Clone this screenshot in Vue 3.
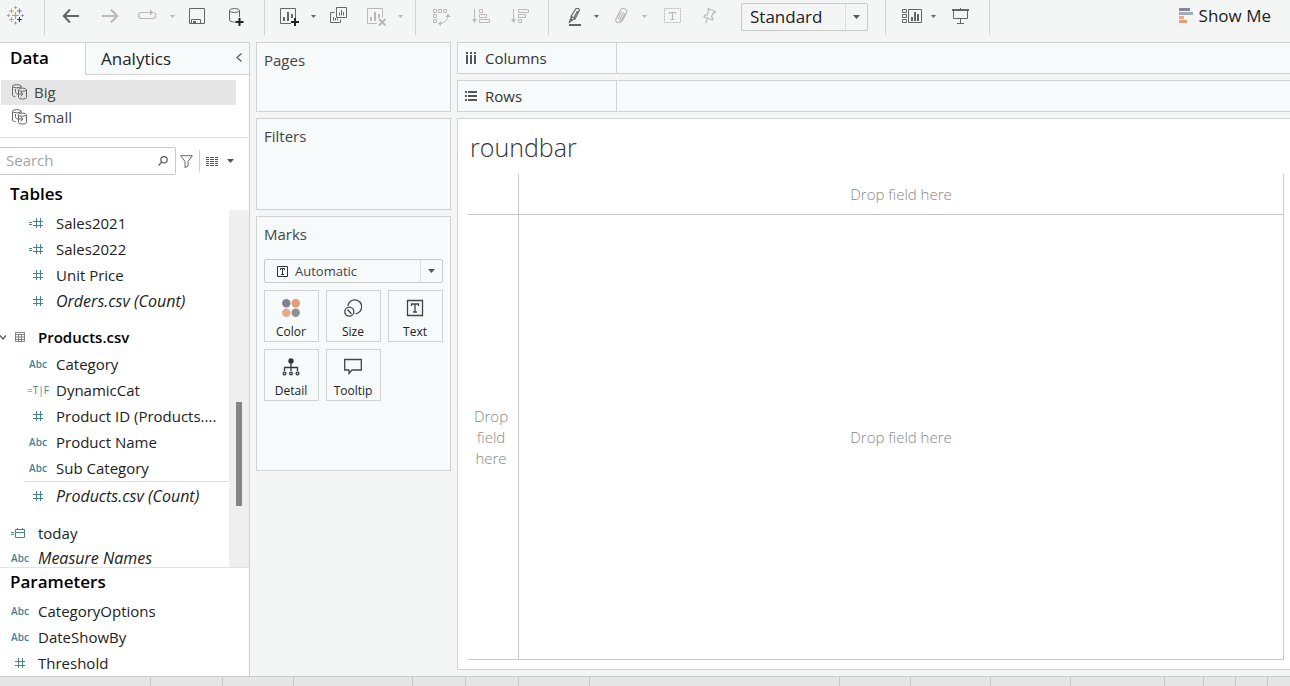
<script setup>
import { ref } from 'vue'

const sources = ['Big', 'Small']
const selected = ref('Big')
const size = ref('Standard')
const mark = ref('Automatic')
const search = ref('')

const rows = [
  { kind: 'calc', label: 'Sales2021', nested: true },
  { kind: 'calc', label: 'Sales2022', nested: true },
  { kind: 'num', label: 'Unit Price', nested: true },
  { kind: 'num', label: 'Orders.csv (Count)', nested: true, italic: true },
  { kind: 'table', label: 'Products.csv', header: true },
  { kind: 'abc', label: 'Category', nested: true },
  { kind: 'bool', label: 'DynamicCat', nested: true },
  { kind: 'num', label: 'Product ID (Products....', nested: true },
  { kind: 'abc', label: 'Product Name', nested: true },
  { kind: 'abc', label: 'Sub Category', nested: true },
  { kind: 'num', label: 'Products.csv (Count)', nested: true, italic: true, ruled: true },
  { kind: 'date', label: 'today', spaced: true },
  { kind: 'abc', label: 'Measure Names', italic: true, last: true }
]
const params = [
  { kind: 'abc', label: 'CategoryOptions' },
  { kind: 'abc', label: 'DateShowBy' },
  { kind: 'num', label: 'Threshold' }
]
const sheetTabs = [150, 71, 70, 118, 52, 52, 70, 249, 70, 79, 79, 93, 38, 31, 31]
</script>

<template>
  <div class="app">
    <header class="toolbar">
      <div class="group logo">
        <svg width="19" height="19" viewBox="0 0 19 19" fill="none" aria-hidden="true">
          <path d="M6 9.500h7M9.500 6v7" stroke="#e8914d" stroke-width="1.200" />
          <path d="M3 5h5M5.500 2.500v5" stroke="#d0a070" />
          <path d="M11 5h5M13.500 2.500v5" stroke="#5b879b" />
          <path d="M3 13.500h5M5.500 11v5" stroke="#e0a35d" />
          <path d="M11 13.500h5M13.500 11v5" stroke="#1f457e" stroke-width="1.200" />
          <path d="M8 1.500h3M9.500 0v3M1 9.500h3M2.500 8v3" stroke="#98a3b8" />
          <path d="M15 9.500h3M16.500 8v3M8 17h3M9.500 15.500v3" stroke="#9a99b6" />
        </svg>
      </div>
      <div class="group g1">
        <button class="tool" aria-label="Undo"><svg width="19" height="19" viewBox="0 0 19 19"><path d="M3 9h15M9 2.500 2.800 9 9 15.500" stroke-width="2" /></svg></button>
        <button class="tool off" aria-label="Redo"><svg width="19" height="19" viewBox="0 0 19 19"><path d="M2 9h15M11 2.500 17.200 9 11 15.500" stroke-width="2" /></svg></button>
        <button class="tool off" aria-label="Replay"><svg width="19" height="19" viewBox="0 0 19 19"><path d="M9 11.500h5a3 3 0 0 0 2.800-3V8a3 3 0 0 0-2.300-2.500M6 11.500H2a3 3 0 0 1-2.500-3A3 3 0 0 1 2 5.500h10M5 11.500h6" stroke-width="1.200" /><path class="solid" d="M11 2.200 14.500 5.500 11 8.800z" /></svg></button>
        <button class="caret off" aria-label="Replay options"><svg width="5" height="3" viewBox="0 0 5 3"><path class="solid" d="M0 0h5L2.500 3z" /></svg></button>
        <button class="tool" aria-label="Save"><svg width="19" height="19" viewBox="0 0 19 19"><path d="M2.500 1.500h15v15h-15zM4.500 16v-3.500h9V16" /><path class="solid" d="M6 14h3v2.500H6z" /></svg></button>
        <button class="tool" aria-label="New data source"><svg width="19" height="19" viewBox="0 0 19 19"><ellipse cx="8.500" cy="3.500" rx="5" ry="2" /><path d="M3.500 3.500v9.500c0 1 2 2 5 2M13.500 3.500V10" /><path d="M9.500 15h8M13.500 11v8" class="plus" /></svg></button>
      </div>
      <div class="group g2">
        <button class="tool" aria-label="New worksheet"><svg width="19" height="19" viewBox="0 0 19 19"><path d="M11 16.500H.5v-15h15v10" /><path class="solid" d="M3 10h2v4H3zM7 5h2v9H7zM11 7h2v4h-2z" /><path d="M11 15h8M15 11v8" class="plus" /></svg></button>
        <button class="caret" aria-label="Worksheet options"><svg width="5" height="3" viewBox="0 0 5 3"><path class="solid" d="M0 0h5L2.500 3z" /></svg></button>
        <button class="tool" aria-label="Duplicate"><svg width="19" height="19" viewBox="0 0 19 19"><path d="M8.500.5h10v10h-10zM6.500 5.500h-4v10h10v-3M11.500 5.500v3M13.500 3v5.500M15.500 5v3.500M5.500 10v3.500M7.500 11v2.500M9.500 11.500v2" /></svg></button>
        <button class="tool off" aria-label="Clear sheet"><svg width="19" height="19" viewBox="0 0 19 19"><path d="M10 16.500H.5v-15h15v9" /><path class="solid" d="M3 10h2v4H3zM7 5h2v9H7zM11 7h2v4h-2z" /><path d="m12 12 6.500 6.500M18.500 12 12 18.500" stroke-width="2" /></svg></button>
        <button class="caret off" aria-label="Clear options"><svg width="5" height="3" viewBox="0 0 5 3"><path class="solid" d="M0 0h5L2.500 3z" /></svg></button>
      </div>
      <div class="group g3">
        <button class="tool off" aria-label="Swap rows and columns"><svg width="19" height="19" viewBox="0 0 19 19"><path d="M1.500 2.500h3v3h-3zM6.500 2.500h3v3h-3zM11.500 2.500h3v3h-3zM1.500 7.500h3v3h-3zM1.500 12.500h3v3h-3zM7 16.500c5.500 0 9-3.500 9-8.500" /><path class="solid" d="M16 6.500 13.500 10h5zM6 16.500 9 14v5z" /></svg></button>
        <button class="tool off" aria-label="Sort ascending"><svg width="19" height="19" viewBox="0 0 19 19"><path d="M3.500 2v12M8.500 2.500h3v3h-3zM8.500 7.500h7v3h-7zM8.500 12.500h10v3h-10z" /><path class="solid" d="M1 12h5l-2.500 4z" /></svg></button>
        <button class="tool off" aria-label="Sort descending"><svg width="19" height="19" viewBox="0 0 19 19"><path d="M3.500 2v12M8.500 2.500h10v3h-10zM8.500 7.500h7v3h-7zM8.500 12.500h3v3h-3z" /><path class="solid" d="M1 12h5l-2.500 4z" /></svg></button>
      </div>
      <div class="group g4">
        <button class="tool pen" aria-label="Highlight"><svg width="19" height="19" viewBox="0 0 19 19"><path class="solid" d="M5 17h12v2H5z" /><path d="M12 1.500h2.500l1 1.500-4.500 9-3.500 1-.5-3.500zM7.500 9.500l3.500 2M13.500 4l-3.500 6.500M6.500 11.500l-1 3.500 3-2" stroke-width="1.200" /></svg></button>
        <button class="caret" aria-label="Highlight options"><svg width="5" height="3" viewBox="0 0 5 3"><path class="solid" d="M0 0h5L2.500 3z" /></svg></button>
        <button class="tool off" aria-label="Group members"><svg width="19" height="19" viewBox="0 0 19 19"><path d="M14 6.500 10.500 13.500c-1.500 3.500-7 2.500-5.500-1.500L9.500 3c2-3 7.500-1 6 2.500l-4 8c-1 1.500-3 .5-2.500-1l3.500-7M7 12l3.500-7.500" stroke-width="1.200" /></svg></button>
        <button class="caret off" aria-label="Group options"><svg width="5" height="3" viewBox="0 0 5 3"><path class="solid" d="M0 0h5L2.500 3z" /></svg></button>
        <button class="tool labels off" aria-label="Show mark labels"><svg width="19" height="19" viewBox="0 0 19 19"><rect x="1.500" y="1.500" width="16" height="14" stroke-dasharray="2 1" /><path d="M6.500 7V5.500h6V7M9.500 5.500v7M7.500 12.500h4" stroke-width="1.200" /></svg></button>
        <button class="tool pin off" aria-label="Fix axes"><svg width="19" height="19" viewBox="0 0 19 19"><path d="m8 1.500 7.500 3-1 1.500-1.500-.2-1.500 4 1.500 2-.7 1.200L4 9.700l.5-1.200 2.700-.7 1.500-4zM7.500 11.500l-2 4.500" stroke-width="1.200" /></svg></button>
        <div class="select-box fit">
          <select v-model="size" aria-label="Fit"><option>Standard</option></select>
          <span class="drop"><svg width="7" height="4" viewBox="0 0 7 4"><path d="M0 0h7L3.500 4z" /></svg></span>
        </div>
      </div>
      <div class="group g5">
        <button class="tool cards-btn" aria-label="Show cards"><svg width="19" height="19" viewBox="0 0 19 19"><path d="M.5 2.500h4v3h-4zM.5 7.500h4v3h-4zM.5 12.500h4v3h-4zM6.500 2.500h13v13h-13z" /><path class="solid" d="M9 10h2v4H9zM12 5h2v9h-2zM15 7h2v7h-2z" /></svg></button>
        <button class="caret" aria-label="Card options"><svg width="5" height="3" viewBox="0 0 5 3"><path class="solid" d="M0 0h5L2.500 3z" /></svg></button>
        <button class="tool present" aria-label="Presentation mode"><svg width="19" height="19" viewBox="0 0 19 19"><path class="solid" d="M1 2h17v2H1zM9 1h1v2H9z" /><path d="M2.500 4v7.500h14V4M9.500 12v4.500M6 16.500h7" /></svg></button>
      </div>
      <button class="showme">
        <svg width="14" height="15" viewBox="0 0 14 15" aria-hidden="true"><path fill="#8b8494" d="M0 0h11v3H0z" /><path fill="#9aaebf" d="M0 4h14v3H0z" /><path fill="#eda988" d="M0 8h5v3H0z" /><path fill="#e69b78" d="M0 12h8v3H0z" /></svg>
        Show Me
      </button>
    </header>

    <main class="main">
      <aside class="side">
        <div class="tabs">
          <button class="tab active">Data</button>
          <button class="tab">Analytics</button>
          <button class="collapse" aria-label="Collapse pane"><svg width="6" height="9" viewBox="0 0 6 9"><path d="M5.500.5 1 4.500l4.500 4" fill="none" stroke="#555" stroke-width="1.200" /></svg></button>
        </div>
        <div class="sources">
          <button v-for="s in sources" :key="s" class="source" :class="{ on: s === selected }" @click="selected = s">
            <svg width="15" height="16" viewBox="0 0 15 16" fill="none" stroke="#666" aria-hidden="true">
              <path d="M.5 2.500v8.500c0 1 1 1.500 3 1.800M9 1.800V4" /><ellipse cx="4.700" cy="2.200" rx="4.200" ry="1.600" />
              <ellipse cx="10.300" cy="5.700" rx="4" ry="1.600" /><path d="M6.500 6v7.500c0 2 8 2 8 0V6" />
              <path d="M3.500 5v2.500c0 2 1 2.500 3 2.500h4M8.500 7.800l2.500 2.200-2.500 2.200" />
            </svg>
            {{ s }}
          </button>
        </div>
        <div class="searchbar">
          <div class="search">
            <input v-model="search" type="text" placeholder="Search" aria-label="Search fields" />
            <svg width="10" height="10" viewBox="0 0 10 10" fill="none" stroke="#555" stroke-width="1.200" aria-hidden="true"><circle cx="6" cy="3.800" r="3.200" /><path d="M3.700 6.200.5 9.500" /></svg>
          </div>
          <button class="plain filter" aria-label="Filter fields"><svg width="13" height="13" viewBox="0 0 13 13" fill="none" stroke="#666"><path d="M.7.700h11.600L8 6.500v4.800L5 12.500v-6z" /></svg></button>
          <button class="plain view" aria-label="View as list">
            <svg width="12" height="9" viewBox="0 0 12 9" fill="none" stroke="#555"><path d="M0 .5h12M0 2.500h12M0 4.500h12M0 6.500h12M0 8.500h12" stroke-dasharray="3 1 4 1 3 0" /></svg>
            <svg width="7" height="4" viewBox="0 0 7 4"><path fill="#555" d="M0 0h7L3.500 4z" /></svg>
          </button>
        </div>
        <h2>Tables</h2>
        <div class="tree">
          <ul>
            <li v-for="r in rows" :key="r.label" :class="{ nested: r.nested, italic: r.italic, header: r.header, ruled: r.ruled, spaced: r.spaced, last: r.last }">
              <svg v-if="r.header" class="twisty" width="7" height="5" viewBox="0 0 7 5" fill="none" stroke="#555" stroke-width="1.200" aria-hidden="true"><path d="m0 .5 3 3.500L6 .5" /></svg>
              <span class="kind">
                <template v-if="r.kind === 'abc'">Abc</template>
                <span v-else-if="r.kind === 'bool'" class="bool">=T|F</span>
                <svg v-else width="18" height="12" viewBox="0 0 18 12" fill="none" stroke="#44858a" aria-hidden="true">
                  <path v-if="r.kind === 'calc' || r.kind === 'date'" d="M0 5.500h3M0 7.500h3" />
                  <path v-if="r.kind === 'calc' || r.kind === 'num'" d="M4 4.500h10M4 8.500h10M7.500 1v10M11.500 1v10" />
                  <path v-if="r.kind === 'date'" d="M4.500 2.500h9v8h-9zM4 5.500h10M6.500 1v2M11.500 1v2" />
                  <path v-if="r.kind === 'table'" stroke="#777" d="M4.500 1.500h9v9h-9zM4 3.500h10M4 6h10M4 8.500h10M7.500 4v7M10.500 4v7" stroke-width=".9" />
                </svg>
              </span>
              <span>{{ r.label }}</span>
            </li>
          </ul>
          <div class="track"><div class="thumb"></div></div>
        </div>
        <h2 class="params-title">Parameters</h2>
        <ul>
          <li v-for="p in params" :key="p.label">
            <span class="kind">
              <template v-if="p.kind === 'abc'">Abc</template>
              <svg v-else width="18" height="12" viewBox="0 0 18 12" fill="none" stroke="#44858a" aria-hidden="true"><path d="M4 4.500h10M4 8.500h10M7.500 1v10M11.500 1v10" /></svg>
            </span>
            <span>{{ p.label }}</span>
          </li>
        </ul>
      </aside>

      <div class="cards">
        <section class="card pages"><h3>Pages</h3></section>
        <section class="card filters"><h3>Filters</h3></section>
        <section class="card marks">
          <h3>Marks</h3>
          <div class="select-box mark">
            <svg class="mark-icon" width="11" height="11" viewBox="0 0 11 11" fill="none" stroke="#333" aria-hidden="true"><path d="M.5.5h10v10H.5zM3.500 4V2.500h4V4M5.500 2.500v6M4 8.500h3" /></svg>
            <select v-model="mark" aria-label="Mark type"><option>Automatic</option></select>
            <span class="drop"><svg width="7" height="4" viewBox="0 0 7 4"><path d="M0 0h7L3.500 4z" /></svg></span>
          </div>
          <div class="shelf">
            <button><svg width="18" height="18" viewBox="0 0 18 18"><circle cx="4.300" cy="4.300" r="4.200" fill="#85808f" /><circle cx="13.700" cy="4.300" r="4.200" fill="#e69a76" /><circle cx="4.300" cy="13.700" r="4.200" fill="#e9a984" /><circle cx="13.700" cy="13.700" r="4.200" fill="#8d9196" /></svg>Color</button>
            <button><svg width="18" height="18" viewBox="0 0 18 18" fill="none" stroke="#444" stroke-width="1.300"><path d="M3.800 6.800A7 7 0 1 1 11.500 14.800" /><circle cx="5.300" cy="12.700" r="4.500" /><path d="m3.500 10.500 4 4.500" /></svg>Size</button>
            <button><svg width="18" height="18" viewBox="0 0 18 18" fill="none" stroke="#444" stroke-width="1.300"><path d="M1.500 1.500h15v15h-15zM5.500 7V5h7v2M9 5v8M7 13h4" /></svg>Text</button>
            <button><svg width="18" height="18" viewBox="0 0 18 18" fill="none" stroke="#333" stroke-width="1.300"><circle cx="9" cy="3" r="2.700" fill="#333" stroke="none" /><path d="M9 4v9M2.500 13V9.500h13V13" /><circle cx="2.500" cy="15.500" r="1.400" /><circle cx="9" cy="15.500" r="1.400" /><circle cx="15.500" cy="15.500" r="1.400" /></svg>Detail</button>
            <button><svg width="18" height="18" viewBox="0 0 18 18" fill="none" stroke="#444" stroke-width="1.300"><path d="M.7 1.500h16.600v10.500H8L5 15.500V12H.7z" /></svg>Tooltip</button>
          </div>
        </section>
      </div>

      <div class="work">
        <div class="pill-shelf">
          <div class="pill-label"><svg width="12" height="12" viewBox="0 0 12 12" aria-hidden="true"><path fill="#555" d="M1 0h2v2H1zM5 0h2v2H5zM9 0h2v2H9zM1 3h2v9H1zM5 3h2v9H5zM9 3h2v9H9z" /></svg>Columns</div>
        </div>
        <div class="pill-shelf">
          <div class="pill-label"><svg width="12" height="12" viewBox="0 0 12 12" aria-hidden="true"><path fill="#555" d="M0 1h2v2H0zM0 5h2v2H0zM0 9h2v2H0zM3 1h9v2H3zM3 5h9v2H3zM3 9h9v2H3z" /></svg>Rows</div>
        </div>
        <section class="viz">
          <h1>roundbar</h1>
          <div class="canvas">
            <div class="corner"></div>
            <div class="zone top">Drop field here</div>
            <div class="zone left">Drop field here</div>
            <div class="zone body">Drop field here</div>
          </div>
        </section>
      </div>
    </main>

    <footer class="sheets"><span v-for="(w, i) in sheetTabs" :key="i" :style="{ width: w + 'px' }"></span></footer>
  </div>
</template>

<style>
body { margin: 0; }
</style>

<style scoped>
.app, .app * { box-sizing: border-box; }
.app {
  height: 100vh;
  display: flex;
  flex-direction: column;
  overflow: hidden;
  background: #f4f6f5;
  color: #222;
  font: 15px/26px "Open Sans", "Noto Sans", sans-serif;
}
button, input, select { font: inherit; color: inherit; background: none; border: 0; padding: 0; margin: 0; border-radius: 0; }
ul { list-style: none; margin: 0; padding: 0; }
h1, h2, h3 { margin: 0; }

.toolbar { display: flex; height: 42px; flex: none; }
.group { display: flex; height: 35px; border-right: 1px solid #d2d4d4; flex: none; }
.logo { width: 45px; padding: 6px 0 0 6px; }
.g1 { padding: 0 9px 0 6px; }
.g2 { padding: 0 10px 0 5px; }
.g3 { padding: 0 9px 0 6px; }
.g4 { padding: 0 17px 0 6px; }
.g5 { padding: 0 6px 0 8px; }
.tool, .caret { height: 33px; display: flex; align-items: center; justify-content: center; }
.tool { width: 39px; }
.caret { width: 9px; }
.pen { width: 37px; }
.labels { width: 47px; }
.pin { width: 27px; }
.cards-btn { width: 35px; }
.present { width: 45px; }
.tool svg { fill: none; stroke: #666; overflow: visible; flex: none; }
.caret svg, .tool .solid { fill: #666; stroke: none; }
.off svg { stroke: #bcb8ba; }
.off .solid, .caret.off .solid { fill: #bcb8ba; stroke: none; }
.tool .plus { stroke: #222; stroke-width: 2; }

.select-box { display: flex; align-items: stretch; border: 1px solid #c8caca; border-radius: 2px; position: relative; }
.select-box select { appearance: none; flex: 1; min-width: 0; outline: 0; }
.drop { border-left: 1px solid #dcdede; display: flex; align-items: center; justify-content: center; width: 22px; fill: #555; pointer-events: none; }
.fit { width: 127px; height: 28px; margin: 3px 0 0 18px; font-size: 17px; }
.fit select { padding-left: 8px; }
.showme { margin-left: auto; padding-right: 19px; height: 31px; display: flex; align-items: center; gap: 6px; font-size: 17px; white-space: nowrap; }

.main { flex: 1; min-height: 0; display: grid; grid-template-columns: 250px 195px minmax(0, 1fr); column-gap: 6px; }
.side { background: #fff; border-top: 1px solid #d0d2d2; border-right: 1px solid #d0d2d2; display: flex; flex-direction: column; min-height: 0; overflow: hidden; }
.tabs { display: flex; height: 32px; flex: none; font-size: 17px; position: relative; }
.tab { text-align: left; flex: 1; border-left: 1px solid #d0d2d2; border-bottom: 1px solid #d0d2d2; background: #f6fafb; padding-left: 15px; }
.tab.active { flex: none; width: 85px; border: 0; background: #fff; font-weight: 600; padding: 0 0 2px 10px; color: #000; }
.collapse { position: absolute; right: 7px; top: 10px; display: flex; }
.sources { padding: 5px 13px 7px 1px; border-bottom: 1px solid #e2e2e2; flex: none; }
.source { display: flex; align-items: center; gap: 7px; width: 100%; height: 25px; padding: 0 0 2px 11px; color: #444; }
.source.on { background: #e6e6e6; }

.searchbar { display: flex; align-items: center; padding-top: 9px; flex: none; }
.search { width: 176px; height: 28px; border: 1px solid #c8caca; border-left: 0; border-radius: 0 2px 2px 0; display: flex; align-items: center; padding: 0 7px 0 6px; }
.search input { flex: 1; min-width: 0; outline: 0; padding-bottom: 2px; }
.search input::placeholder { color: #a0a6a6; opacity: 1; }
.plain { display: flex; align-items: center; height: 22px; }
.filter { padding: 0 6px 0 4px; border-right: 1px solid #d0d2d2; }
.view { padding-left: 6px; gap: 9px; }
h2 { font-size: 17px; line-height: 26px; font-weight: 600; color: #000; padding: 6px 0 3px 10px; flex: none; }
.tree { flex: none; height: 358px; display: flex; overflow: hidden; border-bottom: 1px solid #e2e2e2; }
.tree ul { flex: 1; min-width: 0; }
li { display: flex; align-items: center; height: 26px; padding-left: 2px; white-space: nowrap; color: #222; }
.kind { width: 36px; flex: none; display: flex; justify-content: center; font-size: 10px; font-weight: 600; color: #447f94; }
.bool { font-weight: 400; }
.nested { padding-left: 20px; }
.italic { font-style: italic; font-size: 16px; }
.italic .kind { font-style: normal; }
.header { font-weight: 600; color: #000; margin: 10px 0 1px; position: relative; }
.twisty { position: absolute; left: 0; }
.ruled { position: relative; margin-top: 2px; }
.ruled::before { content: ""; position: absolute; left: 24px; right: 0; top: -2px; border-top: 1px solid #dcdcdc; }
.spaced { margin-top: 11px; }
.last { height: 24px; line-height: 20px; }
.track { width: 20px; background: #efefef; padding: 192px 7px 0; flex: none; }
.thumb { height: 104px; background: #858585; }
.params-title { padding: 1px 0 3px 10px; }

.cards { display: flex; flex-direction: column; gap: 6px; }
.card { border: 1px solid #d0d2d2; background: #f6fafb; padding: 4px 7px; }
h3 { font-size: 15px; line-height: 26px; font-weight: 400; color: #444; }
.pages { height: 70px; }
.filters { height: 92px; }
.marks { height: 255px; }
.mark { height: 24px; margin: 12px 0 7px; font-size: 13px; color: #444; padding-left: 12px; align-items: center; }
.mark select { padding-left: 7px; }
.mark .drop { align-self: stretch; }
.shelf { display: grid; grid-template-columns: repeat(3, 1fr); gap: 7px; }
.shelf button { height: 52px; border: 1px solid #d0d2d2; display: flex; flex-direction: column; align-items: center; gap: 7px; padding: 8px 1px 0 0; font-size: 12px; line-height: 16px; }

.work { display: flex; flex-direction: column; gap: 6px; padding-bottom: 6px; min-width: 0; }
.pill-shelf { height: 32px; border: 1px solid #d0d2d2; border-right: 0; background: #f6fafb; flex: none; }
.pill-label { width: 159px; height: 30px; padding-left: 7px; border-right: 1px solid #d0d2d2; display: flex; align-items: center; gap: 8px; color: #333; }
.viz { flex: 1; min-height: 0; background: #fff; border: 1px solid #d0d2d2; border-right: 0; padding: 10px 6px 9px 10px; display: flex; flex-direction: column; }
h1 { font-size: 25px; line-height: 36px; font-weight: 300; color: #333; padding-left: 2px; margin-bottom: 9px; }
.canvas { flex: 1; display: grid; grid-template-columns: 51px 1fr; grid-template-rows: 41px 1fr; border-bottom: 1px solid #c6c8c8; }
.corner, .top { border-bottom: 1px solid #c6c8c8; }
.corner, .left { border-right: 1px solid #c6c8c8; }
.top, .body { border-right: 1px solid #c6c8c8; }
.zone { display: flex; align-items: center; justify-content: center; text-align: center; line-height: 21px; color: #888; font-weight: 300; }
.left { padding-right: 4px; }

.sheets { height: 10px; flex: none; display: flex; background: #e6e6e6; border-top: 1px solid #c8caca; overflow: hidden; }
.sheets span { flex: none; box-sizing: content-box; border-right: 1px solid #c8caca; }
</style>
